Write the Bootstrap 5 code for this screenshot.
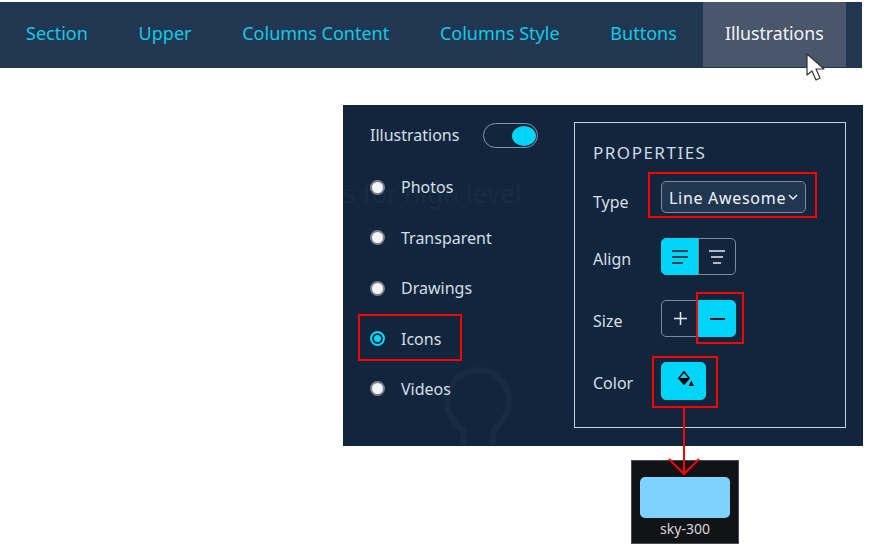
<!DOCTYPE html>
<html lang="en">
<head>
  <meta charset="UTF-8">
  <title>Illustrations properties</title>
  <link href="https://cdn.jsdelivr.net/npm/bootstrap@5.3.0/dist/css/bootstrap.min.css" rel="stylesheet">
  <style>
    body { background: #fff; font-family: "Noto Sans", "Open Sans", sans-serif; overflow: hidden; }
    .page-wrap { position: relative; width: 869px; height: 549px; padding-top: 2px; }

    /* top tabs */
    .top-bar { width: 862px; height: 66px; background: #213751; padding-left: 3px; gap: 4.75px; }
    .top-tab { padding: 0 23px; height: 65px; line-height: 62px; font-size: 18px; color: #0fcbe8; text-decoration: none; }
    .top-tab.is-active { width: 143px; padding: 0; margin-left: -1.75px; text-align: center; font-size: 17.7px; background: #4a566b; color: #f2f5f8; }

    /* dark panel */
    .ill-panel { position: relative; width: 520px; height: 341px; margin: 37px 0 0 343px; background: #11263c; color: #d5dfe9; font-size: 16px; overflow: hidden; }
    .ill-left { width: 231px; padding: 17px 0 0 27px; position: relative; }
    .ill-head { height: 26px; margin-bottom: 26.4px; }
    .ill-switch { width: 55px; height: 25px; margin-left: 24px; border: 1px solid #8793a3; border-radius: 13px; padding: 2px 1px; }
    .ill-switch i { display: block; width: 24px; height: 20px; border-radius: 50%; background: #00d5f7; }
    .ill-radio { height: 26px; margin-bottom: 24.4px; }
    .radio-dot { width: 15px; height: 15px; border-radius: 50%; background: #f4f5f7; border: 2px solid #7f7f90; margin-right: 16px; flex: none; }
    .radio-dot.is-on { background: #00d5f7; border: 2px solid #00d5f7; box-shadow: inset 0 0 0 2px #11263c; }

    .prop-box { width: 272px; height: 306px; margin-top: 17px; border: 1px solid #c9d2dc; padding: 18px 18px; position: relative; }
    .prop-title { font-size: 17px; letter-spacing: 1.5px; line-height: 24px; color: #cfdbe6; margin-bottom: 13px; }
    .prop-row { height: 38px; }
    .type-row { margin-bottom: -2px; }
    .prop-label { width: 68px; flex: none; padding-top: 9px; }
    .type-row .prop-label { padding-top: 12px; }
    .type-select { position: relative; margin-top: 3px; width: 145px; height: 32px; background: #213751; border: 1px solid #7d8b9c; border-radius: 5px; color: #f0f4f8; font-size: 16px; letter-spacing: .7px; padding: 4px 0 0 7px; white-space: nowrap; }
    .type-chev { position: absolute; right: 7px; top: 12px; }
    .seg-btn { width: 38px; height: 37px; padding: 0; border: 1px solid #7d8b9c; background: transparent; border-radius: 5px; color: #e4e9ef; display: flex; align-items: center; justify-content: center; }
    .seg-btn.is-on { background: #00d5f7; border-color: #00d5f7; color: #11263c; }
    .seg-left { border-radius: 5px 0 0 5px; }
    .seg-right { border-radius: 0 5px 5px 0; margin-left: -1px; }
    .paint-btn { width: 45px; height: 38px; }
    .paint-ico { margin: -5px 0 0 5px; }

    /* faded page behind the panel */
    .ghost-text { position: absolute; left: 0; top: 68px; font-size: 26px; line-height: 40px; color: #182c42; white-space: nowrap; }
    .ghost-bulb { position: absolute; left: 100px; top: 262px; }

    /* swatch tooltip */
    .sky-tip { width: 108px; height: 84px; margin: 14px 0 0 631px; background: #121317; border: 1px solid #4a4b50; padding: 16px 8px 0; text-align: center; }
    .sky-fill { height: 41px; background: #7dd3fc; border-radius: 5px; }
    .sky-name { font-size: 14px; line-height: 20px; margin-top: 1px; color: #d8d8d8; }

    /* annotations */
    .red-box { position: absolute; border: 2px solid #f00; }
    .anno-svg { position: absolute; left: 0; top: 0; pointer-events: none; }
  </style>
</head>
<body>
  <div class="page-wrap">
    <div class="top-bar d-flex">
      <a class="top-tab" href="#">Section</a>
      <a class="top-tab" href="#">Upper</a>
      <a class="top-tab" href="#">Columns Content</a>
      <a class="top-tab" href="#">Columns Style</a>
      <a class="top-tab" href="#">Buttons</a>
      <a class="top-tab is-active" href="#">Illustrations</a>
    </div>

    <div class="ill-panel d-flex">
      <div class="ghost-text">s for high level</div>
      <svg class="ghost-bulb" width="72" height="80" viewBox="0 0 72 80" fill="none" stroke="#172b41" stroke-width="6"><path d="M20 78V64C10 54 4 46 4 34a31 31 0 0 1 62 0c0 12-6 20-16 30v14"/></svg>

      <div class="ill-left">
        <div class="ill-head d-flex align-items-center">
          <span>Illustrations</span>
          <span class="ill-switch d-flex justify-content-end"><i></i></span>
        </div>
        <div class="ill-radio d-flex align-items-center"><span class="radio-dot"></span>Photos</div>
        <div class="ill-radio d-flex align-items-center"><span class="radio-dot"></span>Transparent</div>
        <div class="ill-radio d-flex align-items-center"><span class="radio-dot"></span>Drawings</div>
        <div class="ill-radio d-flex align-items-center"><span class="radio-dot is-on"></span>Icons</div>
        <div class="ill-radio d-flex align-items-center"><span class="radio-dot"></span>Videos</div>
      </div>

      <div class="prop-box">
        <div class="prop-title">PROPERTIES</div>
        <div class="d-flex flex-column gap-4">
          <div class="prop-row type-row d-flex">
            <span class="prop-label">Type</span>
            <div class="type-select">Line Awesome
              <svg class="type-chev" width="10" height="7" viewBox="0 0 10 7" fill="none" stroke="#f0f4f8" stroke-width="1.4"><path d="M1 1l4 4 4-4"/></svg>
            </div>
          </div>
          <div class="prop-row d-flex">
            <span class="prop-label">Align</span>
            <div class="d-flex">
              <button class="seg-btn seg-left is-on" type="button"><svg width="16" height="14" viewBox="0 0 16 14" stroke="#0a1522" stroke-width="1.7"><path d="M0 1h16M0 7h16M0 13h11"/></svg></button>
              <button class="seg-btn seg-right" type="button"><svg width="16" height="14" viewBox="0 0 16 14" stroke="currentColor" stroke-width="1.7"><path d="M0 1h16M2 7h12M4 13h8"/></svg></button>
            </div>
          </div>
          <div class="prop-row d-flex">
            <span class="prop-label">Size</span>
            <div class="d-flex">
              <button class="seg-btn seg-left" type="button"><svg width="13" height="13" viewBox="0 0 13 13" stroke="currentColor" stroke-width="1.5"><path d="M0 6.5h13M6.5 0v13"/></svg></button>
              <button class="seg-btn seg-right is-on" type="button"><svg width="15" height="2" viewBox="0 0 15 2" stroke="#0a1522" stroke-width="2"><path d="M0 1h15"/></svg></button>
            </div>
          </div>
          <div class="prop-row d-flex">
            <span class="prop-label">Color</span>
            <button class="seg-btn is-on paint-btn" type="button"><svg class="paint-ico" width="16" height="15" viewBox="0 0 16 15"><path d="M6 .8.9 7.2 6 13l5.1-5.8Z" fill="none" stroke="#000" stroke-width="1.5"/><path d="M.9 7h10.2L6 13.5Z" fill="#000"/><path d="M13.3 9.6 16 15h-5.2Z" fill="#000"/></svg></button>
          </div>
        </div>
      </div>
    </div>

    <div class="sky-tip">
      <div class="sky-fill"></div>
      <div class="sky-name">sky-300</div>
    </div>

    <!-- red callouts drawn on top of the screenshot -->
    <div class="red-box" style="left:358px;top:314px;width:104px;height:47px"></div>
    <div class="red-box" style="left:648px;top:172px;width:169px;height:46px"></div>
    <div class="red-box" style="left:696px;top:292px;width:48px;height:52px"></div>
    <div class="red-box" style="left:652px;top:356px;width:66px;height:52px"></div>
    <svg class="anno-svg" width="869" height="549" fill="none">
      <path d="M684 407V474M669 459l15 15 15-15" stroke="#f00" stroke-width="2"/>
      <path d="M807 54V75L812 71 816 80 820 78 816 69H824Z" fill="#fff" stroke="#333" stroke-width="1.2" stroke-linejoin="round"/>
    </svg>
  </div>
  <script src="https://cdn.jsdelivr.net/npm/bootstrap@5.3.0/dist/js/bootstrap.bundle.min.js"></script>
</body>
</html>
